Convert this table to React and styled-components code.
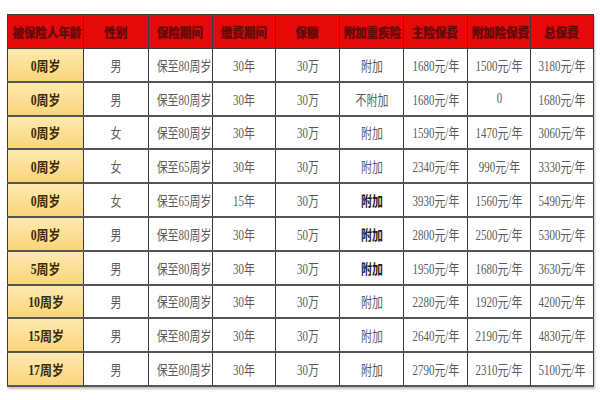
import styled, { createGlobalStyle } from 'styled-components';

const GlobalStyle = createGlobalStyle`
  html, body {
    margin: 0;
    padding: 0;
    background: #ffffff;
  }
`;

const Page = styled.div`
  width: 600px;
  height: 400px;
  padding: 14px 7px 0 7px;
  box-sizing: border-box;
  font-family: "Liberation Serif", "Noto Sans CJK SC", serif;
`;

const Table = styled.table`
  width: 586px;
  border-collapse: collapse;
  table-layout: fixed;
  box-shadow: 1px 2px 2px rgba(0, 0, 0, 0.25);
`;

const HeadCell = styled.th`
  height: 33px;
  padding: 0;
  background: #e60a0a;
  color: #5e0c0c;
  font-size: 13px;
  font-weight: 700;
  text-align: center;
  border: 1.5px solid #3a3a3a;
  text-shadow: 0 0 1px rgba(90, 0, 0, 0.7);
  white-space: nowrap;
  overflow: hidden;
`;

const Cell = styled.td`
  height: 31.8px;
  padding: 0;
  text-align: center;
  font-size: 14px;
  white-space: nowrap;
  overflow: hidden;
  border-left: 1.5px solid #3a3a3a;
  border-right: 1.5px solid #3a3a3a;
  border-top: 1px solid #444;
  border-bottom: 2px solid #555;
  background: ${(p) => (p.$age ? 'linear-gradient(#fde9b0, #f9d57a)' : '#ffffff')};
  color: ${(p) => (p.$age ? '#3b2a05' : p.$bold ? '#1a1a1a' : '#5a5a5a')};
  font-weight: ${(p) => (p.$age || p.$bold ? 700 : 400)};
`;

const Squeeze = styled.span`
  display: inline-block;
  transform: scaleX(${(p) => p.$x || 0.8});
  transform-origin: center;
`;

const headers = ['被保险人年龄', '性别', '保险期间', '缴费期间', '保额', '附加重疾险', '主险保费', '附加险保费', '总保费'];
const widths = [76, 65, 64, 63, 64, 64, 64, 63, 63];

const rows = [
  ['0周岁', '男', '保至80周岁', '30年', '30万', '附加', '1680元/年', '1500元/年', '3180元/年'],
  ['0周岁', '男', '保至80周岁', '30年', '30万', '不附加', '1680元/年', '0', '1680元/年'],
  ['0周岁', '女', '保至80周岁', '30年', '30万', '附加', '1590元/年', '1470元/年', '3060元/年'],
  ['0周岁', '女', '保至65周岁', '30年', '30万', '附加', '2340元/年', '990元/年', '3330元/年'],
  ['0周岁', '女', '保至65周岁', '15年', '30万', '附加', '3930元/年', '1560元/年', '5490元/年', true],
  ['0周岁', '男', '保至80周岁', '30年', '50万', '附加', '2800元/年', '2500元/年', '5300元/年', true],
  ['5周岁', '男', '保至80周岁', '30年', '30万', '附加', '1950元/年', '1680元/年', '3630元/年', true],
  ['10周岁', '男', '保至80周岁', '30年', '30万', '附加', '2280元/年', '1920元/年', '4200元/年'],
  ['15周岁', '男', '保至80周岁', '30年', '30万', '附加', '2640元/年', '2190元/年', '4830元/年'],
  ['17周岁', '男', '保至80周岁', '30年', '30万', '附加', '2790元/年', '2310元/年', '5100元/年'],
];

export default function App() {
  return (
    <Page>
      <GlobalStyle />
      <Table>
        <colgroup>
          {widths.map((w, i) => (
            <col key={i} style={{ width: w }} />
          ))}
        </colgroup>
        <thead>
          <tr>
            {headers.map((h) => (
              <HeadCell key={h}>
                <Squeeze $x={0.88}>{h}</Squeeze>
              </HeadCell>
            ))}
          </tr>
        </thead>
        <tbody>
          {rows.map((r, i) => {
            const boldExtra = r[9] === true;
            return (
              <tr key={i}>
                {r.slice(0, 9).map((v, j) => (
                  <Cell key={j} $age={j === 0} $bold={j === 5 && boldExtra}>
                    <Squeeze $x={j === 0 ? 0.85 : 0.78}>{v}</Squeeze>
                  </Cell>
                ))}
              </tr>
            );
          })}
        </tbody>
      </Table>
    </Page>
  );
}
